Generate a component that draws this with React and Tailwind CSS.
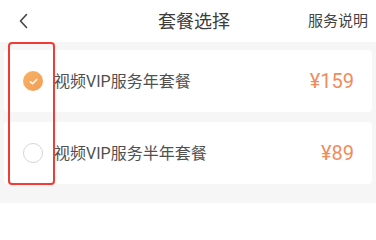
import React from 'react';

const plans = [
  { id: 'year', name: '视频VIP服务年套餐', price: '¥159', checked: true },
  { id: 'half', name: '视频VIP服务半年套餐', price: '¥89', checked: false },
];

const CheckCircle = ({ checked }) =>
  checked ? (
    <span className="flex h-[20px] w-[20px] items-center justify-center rounded-full bg-gradient-to-br from-[#f8b463] to-[#f29c55]">
      <svg width="11" height="11" viewBox="0 0 12 12" fill="none">
        <path d="M2.5 6.2 L5 8.5 L9.5 3.8" stroke="#fff" strokeWidth="1.6" strokeLinecap="round" strokeLinejoin="round" />
      </svg>
    </span>
  ) : (
    <span className="h-[20px] w-[20px] rounded-full border-[1.5px] border-[#d6d6d6] bg-white" />
  );

const App = () => {
  return (
    <div
      className="relative h-[203px] w-[376px] overflow-hidden bg-[#f6f6f6]"
      style={{ fontFamily: 'Roboto, "Noto Sans CJK SC", sans-serif' }}
    >
      {/* Header */}
      <div className="flex h-[42px] items-center bg-white">
        <div className="flex w-[60px] items-center pl-[18px]">
          <svg width="11" height="16" viewBox="0 0 11 16" fill="none">
            <path d="M8.5 1.5 L2.5 8 L8.5 14.5" stroke="#444" strokeWidth="1.6" strokeLinecap="round" strokeLinejoin="round" />
          </svg>
        </div>
        <div className="flex-1 pl-[28px] text-center text-[18px] text-[#3c3c3c]">套餐选择</div>
        <div className="w-[76px] pr-[8px] text-right text-[15px] text-[#444]">服务说明</div>
      </div>

      {/* Plan list */}
      <div className="flex flex-col gap-[10px] px-[4px] pt-[8px]">
        {plans.map((p) => (
          <div key={p.id} className="flex h-[62px] items-center rounded-[4px] bg-white pl-[19px] pr-[18px]">
            <CheckCircle checked={p.checked} />
            <span className="ml-[11px] flex-1 pt-[2px] text-[16px] text-[#505050]">{p.name}</span>
            <span className="text-[20px] text-[#f08c5c]">{p.price}</span>
          </div>
        ))}
      </div>

      {/* Red highlight annotation */}
      <div className="absolute left-[8px] top-[42px] h-[143px] w-[47px] rounded-[4px] border-[2.5px] border-[#f23b35]" />
    </div>
  );
};

export default App;
